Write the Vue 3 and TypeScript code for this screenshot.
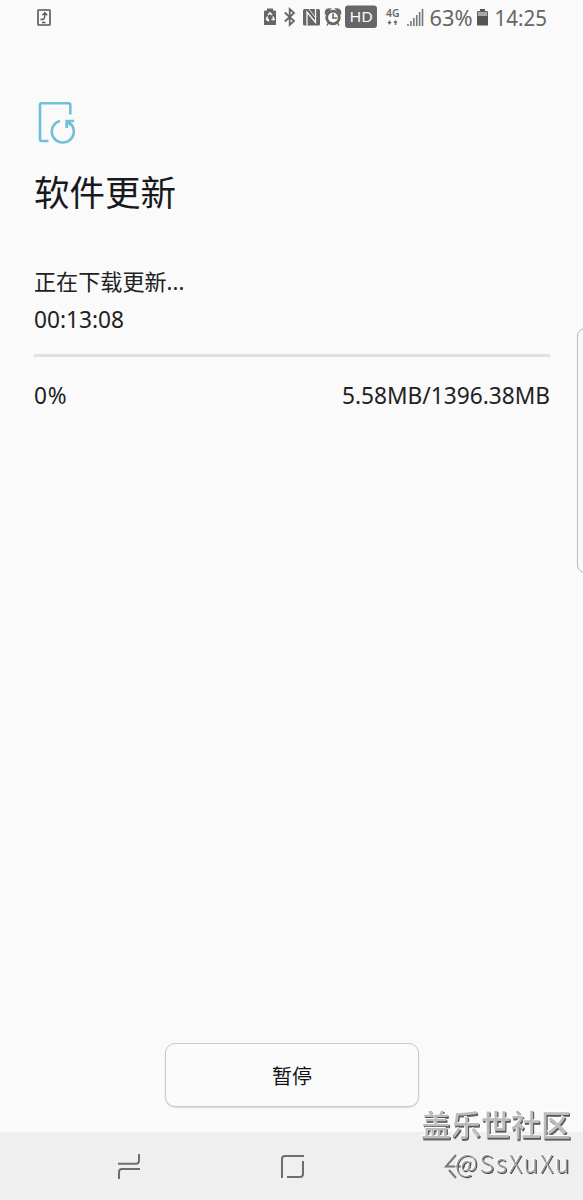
<script setup lang="ts">
const title = '软件更新'
const status = '正在下载更新...'
const remaining = '00:13:08'
const percent = 0
const downloaded = '5.58MB'
const total = '1396.38MB'
const signalBars = [2, 5, 8, 11, 14, 17]
</script>

<template>
  <main class="phone">
    <header class="statusbar">
      <svg class="note" width="14" height="18" viewBox="0 0 14 18">
        <rect x="1" y="1" width="12" height="15" rx="0.5" fill="none" stroke="#555" stroke-width="1.6" />
        <path d="M3.5 10.5H5.5Q7.8 10 7.8 7V4M5.5 6.2L7.8 3.8L10.2 6.2M5 13.5H8.5" fill="none" stroke="#555" stroke-width="1.3" />
      </svg>
      <svg class="icons" width="146" height="28" viewBox="260 4 146 28">
        <path d="M264 11.5Q264 10.5 265 10.5H267V8.5H273V10.5H275Q276 10.5 276 11.5V25H264Z" fill="#666" />
        <path d="M268 15L270 12.8L272 15M273 16.5L274 19.5H271.5M269 21L266.5 19.5L267.5 16.5M269 19.5H267" fill="none" stroke="#fafafa" stroke-width="1.5" />
        <path d="M284.8 12.5L294 21L289.7 25V9L294 13L284.8 21.5" fill="none" stroke="#666" stroke-width="1.8" />
        <rect x="303" y="9" width="17" height="16.5" rx="1.5" fill="#666" />
        <path d="M307 25.5V12L315.5 22.5V9" fill="none" stroke="#fafafa" stroke-width="1.3" />
        <path d="M308.5 8.5L315 17" fill="none" stroke="#fafafa" stroke-width="0.8" />
        <circle cx="333" cy="17.5" r="6.3" fill="#fafafa" stroke="#666" stroke-width="2.8" />
        <path d="M325.5 13.5Q325 9 330 9ZM340.5 13.5Q341 9 336 9ZM329 22L327 25.5M337 22L339 25.5" fill="#666" stroke="#666" stroke-width="1.5" />
        <path d="M333 13.5V18H337" fill="none" stroke="#666" stroke-width="1.6" />
        <rect x="345" y="5.5" width="32" height="22.5" rx="3" fill="#666" />
        <text x="349.5" y="22.3" textLength="23.5" lengthAdjust="spacingAndGlyphs" font-size="15" font-weight="400" fill="#fafafa">HD</text>
        <text x="386" y="17" textLength="13.5" lengthAdjust="spacingAndGlyphs" font-size="10" font-weight="600" fill="#666">4G</text>
        <path d="M387.3 22L389.5 24.8L391.7 22ZM393.3 22.8L395.5 20L397.7 22.8Z" fill="#666" />
        <path d="M389.5 20.5V23M395.5 22V25" stroke="#666" stroke-width="1.4" />
      </svg>
      <svg class="readings" width="142" height="28" viewBox="406 4 142 28">
        <path v-for="(h, i) in signalBars" :key="h" :d="`M${408 + i * 2.9} 26V${26 - h}`" stroke="#777" stroke-width="1.6" />
        <text x="429.5" y="25.5" textLength="43" lengthAdjust="spacingAndGlyphs" font-size="21" fill="#666">63%</text>
        <path d="M477 12H488V16H477Z" fill="#aaa" />
        <path d="M477 16H488V25.5H477ZM480 9H485V11.5H480Z" fill="#555" />
        <path d="M477.5 16V11.5H487.5V16" fill="none" stroke="#666" />
        <text x="494.5" y="25.5" textLength="52.5" lengthAdjust="spacingAndGlyphs" font-size="21" fill="#666">14:25</text>
      </svg>
    </header>

    <section class="content">
      <svg class="update" width="38" height="44" viewBox="38 101 38 44" fill="none" stroke="#6fc0d8" stroke-width="2.6">
        <path d="M70.3 114.5V105Q70.3 103.2 68.5 103.2H41.8Q40 103.2 40 105V139Q40 141 41.8 141H48.5" />
        <path d="M60 120.9A11 11 0 1 0 69.5 122.8" />
        <path d="M74 121H66.7V128M67.2 121.5L71 125.2" />
      </svg>
      <h1>{{ title }}</h1>
      <p class="state">{{ status }}</p>
      <p class="time">{{ remaining }}</p>
      <div class="track"></div>
      <div class="amounts">
        <span class="percent">{{ percent }}%</span>
        <span class="bytes">{{ downloaded }}/{{ total }}</span>
      </div>
    </section>

    <button class="pause" type="button">暂停</button>

    <nav class="navbar">
      <svg width="24" height="28" viewBox="117 1153 24 28" fill="none" stroke="#6d6d6d" stroke-width="2">
        <path d="M118 1163.7H136Q139 1163.7 139 1160.5V1154M140 1169H122Q119 1169 119 1172V1179" />
      </svg>
      <svg width="24" height="28" viewBox="280 1153 24 28" fill="none" stroke="#6d6d6d" stroke-width="2">
        <path d="M304 1156H285Q282 1156 282 1159V1178M303 1161V1174Q303 1177 300 1177H287" />
      </svg>
      <svg width="24" height="28" viewBox="444 1153 24 28" fill="none" stroke="#777" stroke-width="2">
        <path d="M456 1155L446 1166.5H465M449 1170L456 1178" />
      </svg>
    </nav>

    <div class="edge"></div>
    <div class="watermark">
      <div class="community">盖乐世社区</div>
      <div class="author">@SsXuXu</div>
    </div>
  </main>
</template>

<style>
body { margin: 0; }
</style>

<style scoped>
.phone {
  position: relative;
  display: flex;
  flex-direction: column;
  width: 583px;
  height: 1200px;
  overflow: hidden;
  background: #fafafa;
  color: #222;
  font-family: "Noto Sans", "Noto Sans CJK SC", sans-serif;
}
.statusbar {
  display: flex;
  height: 101px;
  box-sizing: border-box;
  padding: 4px 35px 0 37px;
}
.note { margin-top: 5px; }
.icons { margin-left: auto; flex: none; }
.readings { flex: none; }
.content {
  display: flex;
  flex-direction: column;
  padding: 0 33px 0 34px;
}
.update { margin-left: 4px; }
h1 {
  margin: 20px 0 0;
  font-family: "Noto Sans CJK SC", sans-serif;
  font-size: 35.5px;
  line-height: 52px;
  font-weight: 400;
  color: #17191d;
}
p { margin: 0; }
.state {
  margin-top: 46px;
  font-size: 22.1px;
  line-height: 36px;
}
.time {
  margin-top: 3px;
  font-size: 22.7px;
  line-height: 36px;
}
.track {
  height: 3px;
  margin-top: 16px;
  background: #e1e1e1;
}
.amounts {
  display: flex;
  justify-content: space-between;
  margin-top: 20px;
  font-size: 22.7px;
  line-height: 37px;
}
.percent { letter-spacing: 0.8px; }
.pause {
  width: 254px;
  height: 64px;
  margin: auto 0 25px 165px;
  padding: 0;
  border: 1px solid #c9c9c9;
  border-radius: 10px;
  background: #fbfbfb;
  box-shadow: 0 1px 1px #ddd;
  color: #111;
  font: 400 20px "Noto Sans CJK SC", sans-serif;
}
.navbar {
  display: flex;
  height: 68px;
  box-sizing: border-box;
  padding: 21px 115px 0 117px;
  justify-content: space-between;
  background: #efefef;
}
.navbar svg:nth-child(2) { margin-right: 1px; }
.edge {
  position: absolute;
  top: 328px;
  right: -12px;
  width: 16px;
  height: 243px;
  border: 1px solid #b9b9b9;
  border-radius: 8px;
}
.watermark {
  position: absolute;
  left: 421px;
  top: 1103px;
  width: 162px;
  font-family: "Noto Sans CJK SC", sans-serif;
  white-space: nowrap;
  will-change: transform;
}
.community {
  font-size: 30px;
  line-height: 40px;
  font-weight: 500;
  color: #bcbcbc;
  text-shadow: -1px -1px 0 #fff, 1px 1px 0 #555, 1px 2px 0 #777;
}
.author {
  margin: 2px 0 0 34px;
  font-size: 25px;
  line-height: 34px;
  font-weight: 300;
  letter-spacing: 1.7px;
  color: #999;
  text-shadow: -1px -1px 0 #fff, 1px 1px 0 #444;
}
</style>
